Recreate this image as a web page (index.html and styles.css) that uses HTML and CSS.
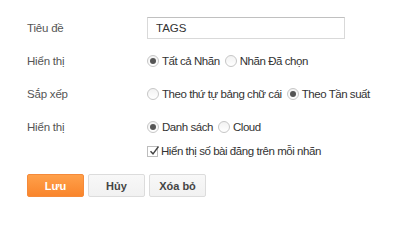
FILE: index.html
```html
<!DOCTYPE html>
<html lang="vi">
<head>
<meta charset="utf-8">
<link rel="stylesheet" href="styles.css">
</head>
<body>
<form class="form">
  <div class="row">
    <div class="label">Tiêu đề</div>
    <div class="field"><div class="input">TAGS</div></div>
  </div>
  <div class="row">
    <div class="label">Hiển thị</div>
    <div class="field">
      <span class="opt"><span class="radio on"></span>Tất cả Nhãn</span>
      <span class="opt"><span class="radio"></span>Nhãn Đã chọn</span>
    </div>
  </div>
  <div class="row">
    <div class="label">Sắp xếp</div>
    <div class="field">
      <span class="opt"><span class="radio"></span>Theo thứ tự bảng chữ cái</span>
      <span class="opt"><span class="radio on"></span>Theo Tần suất</span>
    </div>
  </div>
  <div class="row">
    <div class="label">Hiển thị</div>
    <div class="field">
      <span class="opt"><span class="radio on"></span>Danh sách</span>
      <span class="opt"><span class="radio"></span>Cloud</span>
    </div>
  </div>
  <div class="row check-row">
    <div class="label"></div>
    <div class="field">
      <span class="opt"><span class="check"><svg viewBox="0 0 12 12" width="12" height="12"><path d="M2.5 6.2 L5 8.8 L10.5 1.5" fill="none" stroke="#444" stroke-width="1.4"/></svg></span>Hiển thị số bài đăng trên mỗi nhãn</span>
    </div>
  </div>
  <div class="buttons">
    <button type="button" class="btn primary">Lưu</button>
    <button type="button" class="btn">Hủy</button>
    <button type="button" class="btn">Xóa bỏ</button>
  </div>
</form>
</body>
</html>
```

FILE: styles.css
```css
html, body {
  margin: 0;
  padding: 0;
  background: #fff;
}
body {
  font-family: "Liberation Sans", Arial, sans-serif;
  font-size: 11px;
  color: #333;
}
.form {
  padding: 11px 0 0 27px;
}
.row {
  display: flex;
  align-items: center;
  height: 33px;
}
.label {
  width: 120px;
  flex: none;
  color: #555;
  font-size: 11.5px;
  letter-spacing: -0.2px;
}
.field {
  display: flex;
  align-items: center;
  gap: 5px;
}
.input {
  box-sizing: border-box;
  width: 198px;
  height: 22px;
  border: 1px solid #d9d9d9;
  border-top-color: #c0c0c0;
  padding: 0 8px;
  display: flex;
  align-items: center;
  color: #333;
  font-size: 11.5px;
}
.opt {
  display: inline-flex;
  align-items: center;
  color: #333;
  font-size: 11.5px;
  letter-spacing: -0.45px;
}
.radio {
  box-sizing: border-box;
  width: 12px;
  height: 12px;
  border-radius: 50%;
  border: 1px solid #c6c6c6;
  background: linear-gradient(#f2f2f2, #fff);
  margin-right: 3px;
  display: inline-flex;
  align-items: center;
  justify-content: center;
}
.radio.on::before {
  content: "";
  width: 6px;
  height: 6px;
  border-radius: 50%;
  background: #555;
}
.check-row {
  height: 16px;
}
.check {
  box-sizing: border-box;
  width: 11px;
  height: 11px;
  border: 1px solid #bdbdbd;
  margin-right: 3px;
  position: relative;
}
.check svg {
  position: absolute;
  left: 0;
  top: -2px;
}
.buttons {
  display: flex;
  gap: 4px;
  margin-top: 15px;
}
.btn {
  box-sizing: border-box;
  width: 57px;
  height: 23px;
  border: 1px solid #dcdcdc;
  border-radius: 2px;
  background: linear-gradient(#f8f8f8, #f1f1f1);
  font-family: "Liberation Sans", Arial, sans-serif;
  font-size: 11px;
  font-weight: bold;
  color: #444;
  padding: 0;
}
.btn.primary {
  border-color: #f58a3a;
  background: linear-gradient(#ffa04a, #f9852c);
  color: #fff;
}
```
